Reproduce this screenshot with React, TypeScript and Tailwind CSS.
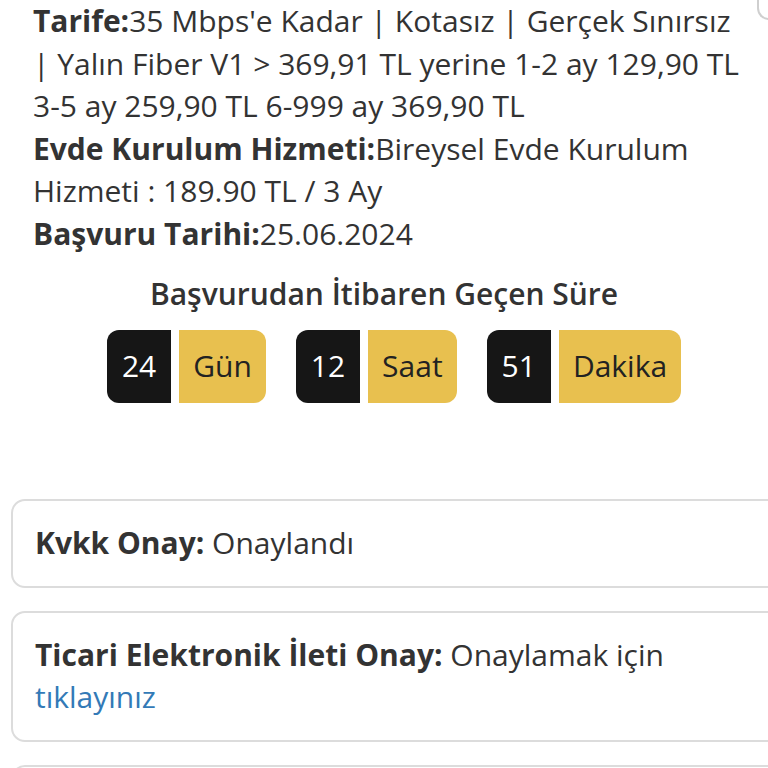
import React from 'react';

const font = { fontFamily: '"Open Sans", "Noto Sans", sans-serif' };

function Counter({ value, label }: { value: string; label: string }) {
  return (
    <div className="flex gap-2">
      <div className="h-[73px] flex items-center px-[15px] bg-[#161616] text-white rounded-l-[12px]">{value}</div>
      <div className="h-[73px] flex items-center px-[14px] bg-[#e8c04f] text-[#222] rounded-r-[12px]">{label}</div>
    </div>
  );
}

export default function App() {
  return (
    <div className="relative w-[768px] h-[768px] overflow-hidden bg-white text-[#333] text-[30px] leading-[42.6px]" style={font}>
      {/* corner of an element cut by the right edge */}
      <div className="absolute z-10 left-[757px] top-0 w-[20px] h-[20px] border-l-2 border-b-2 border-[#cfcfcf] rounded-bl-[12px]" />

      <div className="ml-[33px] w-[707px]">
        <p>
          <b className="font-bold">Tarife:</b>35 Mbps'e Kadar | Kotasız | Gerçek Sınırsız | Yalın Fiber V1 &gt; 369,91 TL yerine 1-2 ay 129,90 TL 3-5 ay 259,90 TL 6-999 ay 369,90 TL
        </p>
        <p>
          <b className="font-bold">Evde Kurulum Hizmeti:</b>Bireysel Evde Kurulum Hizmeti : 189.90 TL / 3 Ay
        </p>
        <p>
          <b className="font-bold">Başvuru Tarihi:</b>25.06.2024
        </p>
      </div>

      <h3 className="mt-[17px] text-center font-semibold">Başvurudan İtibaren Geçen Süre</h3>

      <div className="mt-[15px] pl-[20px] flex justify-center gap-[30px]">
        <Counter value="24" label="Gün" />
        <Counter value="12" label="Saat" />
        <Counter value="51" label="Dakika" />
      </div>

      <div className="ml-[11px] w-[780px] mt-[96px] flex flex-col gap-[23px]">
        <div className="border-2 border-[#dcdcdc] rounded-[14px] px-[22px] py-[21px]">
          <b className="font-bold">Kvkk Onay:</b> Onaylandı
        </div>
        <div className="border-2 border-[#dcdcdc] rounded-[14px] px-[22px] py-[21px] pr-[90px]">
          <b className="font-bold">Ticari Elektronik İleti Onay:</b> Onaylamak için{' '}
          <a className="text-[#337ab7]">tıklayınız</a>
        </div>
        <div className="border-2 border-[#dcdcdc] rounded-[14px] px-[22px] py-[21px] h-[100px]" />
      </div>
    </div>
  );
}
